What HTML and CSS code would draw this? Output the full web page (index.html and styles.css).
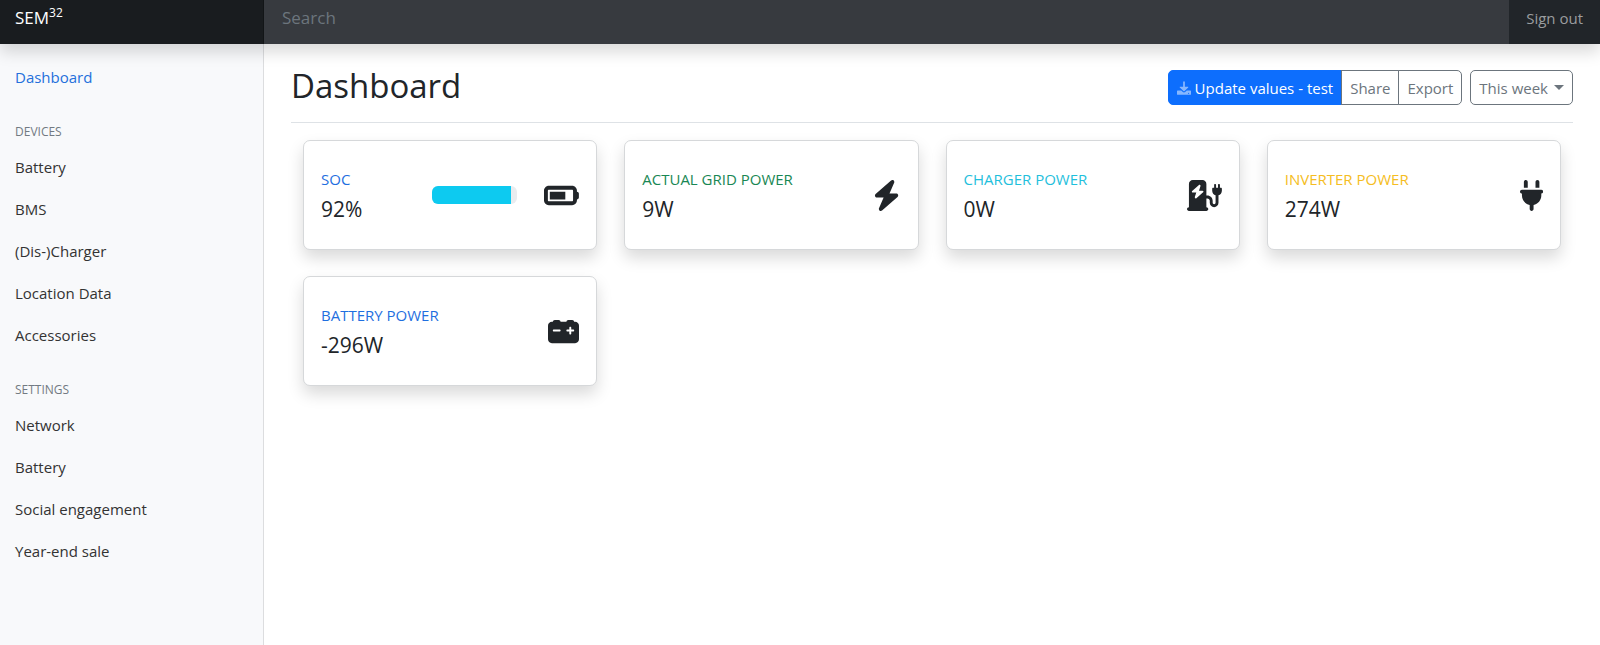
FILE: index.html
```html
<!DOCTYPE html>
<html lang="en">
<head>
<meta charset="utf-8">
<meta name="viewport" content="width=device-width, initial-scale=1">
<title>SEM32 Dashboard</title>
<link rel="stylesheet" href="styles.css">
</head>
<body>
<header class="topbar">
  <a class="brand" href="#">SEM<sup class="brand-sup">32</sup></a>
  <input class="search" type="text" placeholder="Search" aria-label="Search">
  <a class="signout" href="#">Sign out</a>
</header>
<div class="layout">
  <nav class="sidebar" aria-label="Main">
    <ul class="nav">
      <li><a class="nav-link active" href="#">Dashboard</a></li>
    </ul>
    <h6 class="nav-heading">Devices</h6>
    <ul class="nav">
      <li><a class="nav-link" href="#">Battery</a></li>
      <li><a class="nav-link" href="#">BMS</a></li>
      <li><a class="nav-link" href="#">(Dis-)Charger</a></li>
      <li><a class="nav-link" href="#">Location Data</a></li>
      <li><a class="nav-link" href="#">Accessories</a></li>
    </ul>
    <h6 class="nav-heading">Settings</h6>
    <ul class="nav">
      <li><a class="nav-link" href="#">Network</a></li>
      <li><a class="nav-link" href="#">Battery</a></li>
      <li><a class="nav-link" href="#">Social engagement</a></li>
      <li><a class="nav-link" href="#">Year-end sale</a></li>
    </ul>
  </nav>
  <main class="main">
    <div class="page-head">
      <h1 class="title">Dashboard</h1>
      <div class="toolbar">
        <div class="btn-group">
          <button class="btn btn-primary" type="button">
            <svg class="btn-icon" viewBox="0 0 512 512" aria-hidden="true"><path d="M224 16h64v192h108c17 0 25 20 13 32L269 372c-7 7-19 7-26 0L103 240c-12-12-4-32 13-32h108zM24 344h130l61 56c24 23 58 23 82 0l61-56h130c13 0 24 11 24 24v112c0 13-11 24-24 24H24c-13 0-24-11-24-24V368c0-13 11-24 24-24zm400 86a22 22 0 1 0 0 44 22 22 0 1 0 0-44z"/></svg>
            Update values - test
          </button>
          <button class="btn" type="button">Share</button>
          <button class="btn" type="button">Export</button>
        </div>
        <button class="btn btn-menu" type="button">This week<span class="caret"></span></button>
      </div>
    </div>
    <div class="cards">
      <section class="card">
        <div class="metric">
          <h2 class="label blue">SOC</h2>
          <p class="value">92%</p>
        </div>
        <div class="progress" role="progressbar" aria-label="State of charge" aria-valuenow="92" aria-valuemin="0" aria-valuemax="100"><div class="progress-bar" style="width: 92%"></div></div>
        <svg class="icon" viewBox="0 0 576 512" aria-hidden="true"><path d="M464 160c8.800 0 16 7.200 16 16V336c0 8.800-7.200 16-16 16H80c-8.800 0-16-7.200-16-16V176c0-8.800 7.200-16 16-16H464zM80 96C35.800 96 0 131.800 0 176V336c0 44.200 35.800 80 80 80H464c44.200 0 80-35.800 80-80V320c17.700 0 32-14.300 32-32V224c0-17.700-14.300-32-32-32V176c0-44.200-35.800-80-80-80H80zm272 96H96V320H352V192z"/></svg>
      </section>
      <section class="card">
        <div class="metric">
          <h2 class="label green">Actual grid power</h2>
          <p class="value">9W</p>
        </div>
        <svg class="icon" viewBox="0 0 448 512" aria-hidden="true"><path d="M349.400 44.600c5.900-13.700 1.500-29.700-10.600-38.500s-28.600-8-39.900 1.800l-256 224c-10 8.800-13.600 22.900-8.900 35.300S50.700 288 64 288H175.500L98.600 467.400c-5.900 13.700-1.500 29.700 10.600 38.500s28.600 8 39.900-1.800l256-224c10-8.800 13.600-22.900 8.900-35.300s-16.600-20.700-30-20.700H272.500L349.400 44.600z"/></svg>
      </section>
      <section class="card">
        <div class="metric">
          <h2 class="label cyan">Charger power</h2>
          <p class="value">0W</p>
        </div>
        <svg class="icon" viewBox="0 0 576 512" aria-hidden="true"><path d="M96 0C60.700 0 32 28.700 32 64V448c-17.700 0-32 14.300-32 32s14.300 32 32 32H320c17.700 0 32-14.300 32-32s-14.300-32-32-32V304h16c22.100 0 40 17.900 40 40v32c0 39.800 32.200 72 72 72s72-32.200 72-72V252.300c32.500-10.200 56-40.500 56-76.300V144c0-8.800-7.200-16-16-16H544V80c0-8.800-7.200-16-16-16s-16 7.200-16 16v48H480V80c0-8.800-7.200-16-16-16s-16 7.200-16 16v48H432c-8.800 0-16 7.200-16 16v32c0 35.800 23.500 66.100 56 76.300V376c0 13.300-10.700 24-24 24s-24-10.700-24-24V344c0-48.600-39.400-88-88-88H320V64c0-35.300-28.700-64-64-64H96zM216.900 82.700c6 4 8.500 11.500 6.300 18.300l-25 74.900H256c6.700 0 12.700 4.200 15 10.400s.5 13.300-4.600 17.700l-112 96c-5.500 4.700-13.400 5.100-19.300 1.100s-8.500-11.500-6.300-18.300l25-74.900H96c-6.700 0-12.700-4.200-15-10.400s-.5-13.300 4.600-17.700l112-96c5.500-4.700 13.400-5.100 19.300-1.100z"/></svg>
      </section>
      <section class="card">
        <div class="metric">
          <h2 class="label yellow">Inverter power</h2>
          <p class="value">274W</p>
        </div>
        <svg class="icon" viewBox="0 0 384 512" aria-hidden="true"><path d="M96 0C78.300 0 64 14.300 64 32v96h64V32c0-17.700-14.300-32-32-32zM288 0c-17.700 0-32 14.300-32 32v96h64V32c0-17.700-14.300-32-32-32zM32 160c-17.700 0-32 14.300-32 32s14.300 32 32 32v32c0 77.400 55 142 128 156.800V480c0 17.700 14.300 32 32 32s32-14.300 32-32V412.800C297 398 352 333.400 352 256V224c17.700 0 32-14.300 32-32s-14.300-32-32-32H32z"/></svg>
      </section>
      <section class="card">
        <div class="metric">
          <h2 class="label blue">Battery power</h2>
          <p class="value">-296W</p>
        </div>
        <svg class="icon" viewBox="0 0 512 512" aria-hidden="true"><path d="M80 96c0-17.700 14.300-32 32-32h64c17.700 0 32 14.300 32 32l96 0c0-17.700 14.300-32 32-32h64c17.700 0 32 14.300 32 32h16c35.300 0 64 28.700 64 64V384c0 35.300-28.700 64-64 64H64c-35.300 0-64-28.700-64-64V160c0-35.300 28.700-64 64-64l16 0zm304 96c0-8.800-7.200-16-16-16s-16 7.200-16 16v32H320c-8.800 0-16 7.200-16 16s7.200 16 16 16h32v32c0 8.800 7.200 16 16 16s16-7.200 16-16V256h32c8.800 0 16-7.200 16-16s-7.200-16-16-16H384V192zM80 240c0 8.800 7.200 16 16 16h96c8.800 0 16-7.200 16-16s-7.200-16-16-16H96c-8.800 0-16 7.200-16 16z"/></svg>
      </section>
    </div>
  </main>
</div>
</body>
</html>
```
FILE: styles.css
```css
* {
  box-sizing: border-box;
}

body {
  margin: 0;
  min-height: 100vh;
  display: flex;
  flex-direction: column;
  font-family: "Segoe UI", "Open Sans", "Noto Sans", sans-serif;
  font-size: 15px;
  line-height: 24px;
  color: #212529;
  background: #fff;
}

h1, h2, h6, p, ul {
  margin: 0;
  padding: 0;
  font-weight: 400;
}

a {
  text-decoration: none;
}

.topbar {
  position: relative;
  z-index: 1;
  display: flex;
  height: 44px;
  background: #212529;
  box-shadow: 0 8px 16px rgba(0, 0, 0, 0.15);
}

.brand {
  width: 264px;
  padding: 6px 15px;
  font-size: 17px;
  color: #fff;
  background: #191c1f;
  box-shadow: inset -1px 0 0 rgba(0, 0, 0, 0.25);
}

.brand-sup {
  font-size: 12px;
  line-height: 0;
}

.search {
  flex: 1;
  min-width: 0;
  padding: 6px 18px 14px;
  border: 0;
  font: inherit;
  font-size: 17px;
  color: #fff;
  background: #373a3f;
}

.search::placeholder {
  color: #6c757d;
  opacity: 1;
}

.signout {
  padding: 6px 17px;
  color: #9b9d9f;
}

.layout {
  flex: 1;
  display: flex;
}

.sidebar {
  width: 264px;
  padding-top: 12px;
  border-right: 1px solid #dcdddf;
  background: #f8f9fb;
}

.nav {
  list-style: none;
}

.nav-link {
  display: block;
  padding: 9px 15px;
  color: #333;
}

.nav-link.active {
  color: #2470dc;
}

.nav-heading {
  padding: 22px 15px 2px;
  font-size: 12px;
  text-transform: uppercase;
  color: #727a82;
}

.main {
  flex: 1;
  min-width: 0;
  padding: 26px 27px;
}

.page-head {
  display: flex;
  justify-content: space-between;
  align-items: flex-start;
  padding-bottom: 17px;
  border-bottom: 1px solid #dee2e6;
}

.title {
  font-size: 33px;
  line-height: 32px;
}

.toolbar {
  display: flex;
  gap: 8px;
}

.btn-group {
  display: flex;
}

.btn {
  display: flex;
  align-items: center;
  height: 35px;
  padding: 0 8px;
  border: 1px solid #6c757d;
  font: inherit;
  color: #6c757d;
  background: #fff;
}

.btn-group .btn + .btn {
  margin-left: -1px;
}

.btn-group .btn:first-child {
  border-radius: 5px 0 0 5px;
}

.btn-group .btn:last-child {
  border-radius: 0 5px 5px 0;
}

.btn-menu {
  gap: 6px;
  border-radius: 5px;
}

.btn-group .btn-primary {
  gap: 4px;
  border-color: #0d6efd;
  color: #fff;
  background: #0d6efd;
}

.btn-icon {
  width: 14px;
  height: 14px;
  fill: #fff;
  opacity: 0.5;
}

.caret {
  border: 5px solid transparent;
  border-top-color: currentColor;
  border-bottom: 0;
}

.cards {
  display: grid;
  grid-template-columns: repeat(4, 1fr);
  gap: 26px 27px;
  padding: 17px 12px;
}

.card {
  display: flex;
  align-items: center;
  min-height: 110px;
  padding: 17px;
  border: 1px solid #d6d8da;
  border-radius: 7px;
  background: #fff;
  box-shadow: 0 8px 16px rgba(0, 0, 0, 0.15);
}

.metric {
  flex: 1;
}

.label {
  font-size: 15px;
  line-height: 28px;
  text-transform: uppercase;
}

.value {
  font-size: 21px;
  line-height: 32px;
}

.blue { color: #1f6fe0; }
.green { color: #198754; }
.cyan { color: #1fc0dc; }
.yellow { color: #f5bd22; }

.progress {
  width: 85px;
  height: 18px;
  margin-right: 27px;
  border-radius: 6px;
  overflow: hidden;
  background: #e9ecef;
}

.progress-bar {
  height: 100%;
  background: #0dcaf0;
}

.icon {
  height: 31px;
  fill: #212529;
}
```
